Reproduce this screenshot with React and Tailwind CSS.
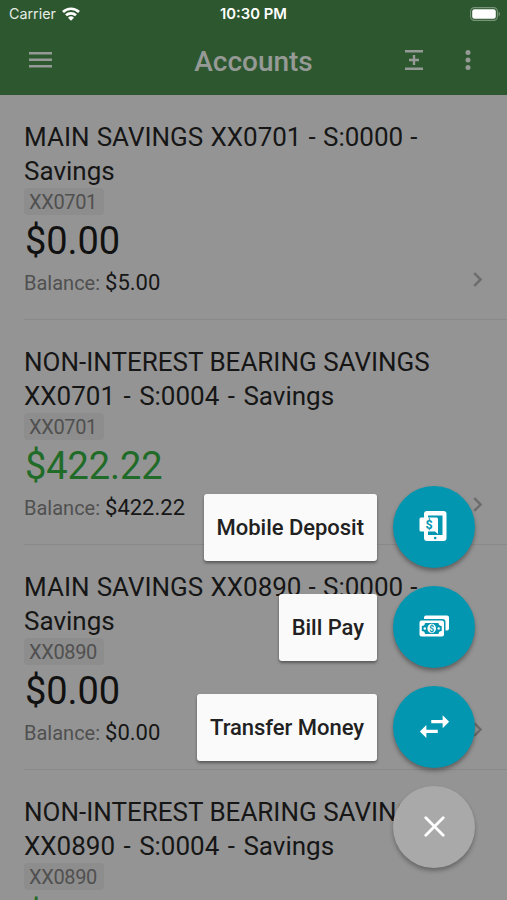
import { MdSwapHoriz, MdChevronRight } from 'react-icons/md';

const accounts = [
  { lines: ['MAIN SAVINGS XX0701 - S:0000 -', 'Savings'], mask: 'XX0701', amount: '$0.00', balance: '$5.00', spacing: 'block [word-spacing:0.7px]' },
  { lines: ['NON-INTEREST BEARING SAVINGS', 'XX0701 - S:0004 - Savings'], mask: 'XX0701', amount: '$422.22', balance: '$422.22', positive: true, spacing: 'block last:[word-spacing:2px]' },
  { lines: ['MAIN SAVINGS XX0890 - S:0000 -', 'Savings'], mask: 'XX0890', amount: '$0.00', balance: '$0.00', spacing: 'block [word-spacing:0.7px]' },
  { lines: ['NON-INTEREST BEARING SAVINGS', 'XX0890 - S:0004 - Savings'], mask: 'XX0890', amount: '$422.22', balance: '$422.22', positive: true, spacing: 'block last:[word-spacing:2px]' },
];

function WifiIcon() {
  return (
    <svg className="h-[14px] w-[18px]" viewBox="0 0 18 14" fill="none" stroke="white" strokeWidth="2.7">
      <path d="M1 5a11.5 11.5 0 0 1 16 0" />
      <path d="M4 8.3a7.3 7.3 0 0 1 10 0" />
      <path d="M9 13.8L6 10.8a4.3 4.3 0 0 1 6 0z" fill="white" stroke="none" />
    </svg>
  );
}

function BatteryIcon() {
  return (
    <svg className="h-[14px] w-[31px]" viewBox="0 0 31 14">
      <rect x="0.6" y="0.6" width="26.8" height="12.8" rx="3.8" fill="none" stroke="#789579" strokeWidth="1.1" />
      <rect x="2.2" y="2.2" width="23.6" height="9.6" rx="2.2" fill="white" />
      <path d="M28.6 4.8c1.9.7 1.9 3.7 0 4.4z" fill="#789579" />
    </svg>
  );
}

function DepositIcon() {
  return (
    <svg className="mr-[2px] h-[30px] w-[28px]" viewBox="0 0 28 30">
      <path
        fillRule="evenodd"
        fill="white"
        d="M8 0h16.500a3 3 0 0 1 3 3v24a3 3 0 0 1-3 3H8a3 3 0 0 1-3-3v-6.500H2a1.500 1.500 0 0 1-1.500-1.500V8A1.500 1.500 0 0 1 2 6.500h3V3a3 3 0 0 1 3-3zM9 4.500v2h8.500A1.500 1.500 0 0 1 19 8v15l-3-2.500H9v3.500h14.500V4.500z"
      />
      <circle cx="16.200" cy="27" r="1.300" fill="#0396b0" />
      <text x="10" y="18.200" textAnchor="middle" fontFamily="Roboto, sans-serif" fontWeight="700" fontSize="12.500" fill="#0396b0">$</text>
    </svg>
  );
}

function CashIcon() {
  return (
    <svg className="h-[22px] w-[30px]" viewBox="0 0 30 22">
      <path d="M5 4V2.500A2 2 0 0 1 7 .5h21a2 2 0 0 1 2 2v11a2 2 0 0 1-2 2h-1.500V7a3 3 0 0 0-3-3z" fill="white" />
      <rect x="0.500" y="5.500" width="24.500" height="16" rx="2" fill="white" />
      <path d="M6 8h13.500a3.200 3.200 0 0 0 3.200 3v5a3.200 3.200 0 0 0-3.200 3H6a3.200 3.200 0 0 0-3.200-3v-5A3.200 3.200 0 0 0 6 8z" fill="#0396b0" />
      <ellipse cx="12.700" cy="13.500" rx="4.300" ry="4.700" fill="white" />
      <circle cx="5.800" cy="13.500" r="1.200" fill="white" />
      <circle cx="19.700" cy="13.500" r="1.200" fill="white" />
      <text x="12.700" y="16.600" textAnchor="middle" fontFamily="Roboto, sans-serif" fontWeight="700" fontSize="8.500" fill="#0396b0">$</text>
    </svg>
  );
}

function AccountRow({ account }) {
  return (
    <li className="flex h-[225px] pt-[25px] pl-6">
      <div className="flex h-[200px] flex-1 justify-between border-b border-[#898989]">
        <div className="whitespace-nowrap">
          <h2 className="text-[26px] leading-[34px] text-[#161616]">
            {account.lines.map((line) => (
              <span key={line} className={account.spacing}>{line}</span>
            ))}
          </h2>
          <div className="flex">
            <span className="h-[27px] w-[80px] rounded bg-[#8d8d8d] px-[5px] text-[20px] leading-[28px] tracking-[-0.35px] text-[#505050]">
              {account.mask}
            </span>
          </div>
          <p className={account.positive ? 'pl-px text-[38px] leading-[53px] tracking-[-0.1px] text-[#1f6b27]' : 'pl-px text-[38px] leading-[53px] tracking-[-0.1px] text-[#111111]'}>
            {account.amount}
          </p>
          <p className="text-[20px] leading-[30px] text-[#505050]">
            Balance: <span className="text-[22px] text-[#161616]">{account.balance}</span>
          </p>
        </div>
        <MdChevronRight className="mt-[145px] mr-[15px] size-[29px] text-[#6c6c6c]" />
      </div>
    </li>
  );
}

function MenuAction({ label, children }) {
  return (
    <div className="flex items-center gap-4">
      <span className="flex h-[67px] items-center rounded-[3px] bg-[#fafafa] px-[13px] text-[22px] font-medium tracking-[-0.03px] text-[#212121] shadow-[0_2px_3px_rgba(0,0,0,0.4)]">
        {label}
      </span>
      <button className="flex size-[82px] items-center justify-center rounded-full bg-[#0396b0] pb-[2px] text-white shadow-[0_3px_4px_rgba(0,0,0,0.35)]">
        {children}
      </button>
    </div>
  );
}

export default function App() {
  return (
    <div className="relative h-[900px] w-[507px] overflow-hidden bg-[#949494] font-[Roboto,sans-serif]">
      <header className="h-[95px] bg-[#2d572f]">
        <div className="grid h-[28px] grid-cols-3 items-center px-[6px] font-[Inter,sans-serif] text-white">
          <div className="flex items-center gap-[6px] pl-[3px] text-[#e5ebe5]">
            <span className="text-[14.3px]">Carrier</span>
            <WifiIcon />
          </div>
          <span className="text-center text-[14.8px] font-semibold">10:30 PM</span>
          <div className="flex justify-end">
            <BatteryIcon />
          </div>
        </div>
        <div className="grid h-[64px] grid-cols-3 items-center text-[#969a96]">
          <svg className="ml-[29px] h-[16px] w-[23px]" viewBox="0 0 23 16" fill="currentColor">
            <path d="M0 0h23v2.500H0zM0 6.500h23v2.500H0zM0 13h23v2.500H0z" />
          </svg>
          <h1 className="pt-[3px] text-center text-[28px] font-medium">Accounts</h1>
          <div className="flex items-center justify-end pr-[36px]">
            <svg className="mr-[42px] h-[20px] w-[18px]" viewBox="0 0 18 20" fill="currentColor">
              <path d="M0 0h18v2.400H0zM0 17.600h18V20H0zM7.800 5h2.400v3.800h3.800v2.400h-3.800V15H7.800v-3.800H4V8.800h3.800z" />
            </svg>
            <svg className="h-[20px] w-[6px]" viewBox="0 0 6 20" fill="currentColor">
              <circle cx="3" cy="2.600" r="2.500" />
              <circle cx="3" cy="10" r="2.500" />
              <circle cx="3" cy="17.400" r="2.500" />
            </svg>
          </div>
        </div>
      </header>

      <ul>
        {accounts.map((account) => (
          <AccountRow key={account.lines.join(' ')} account={account} />
        ))}
      </ul>

      {/* speed dial menu over the list */}
      <div className="absolute right-[32px] bottom-[32px] flex flex-col items-end gap-[18px]">
        <MenuAction label="Mobile Deposit">
          <DepositIcon />
        </MenuAction>
        <MenuAction label="Bill Pay">
          <CashIcon />
        </MenuAction>
        <MenuAction label="Transfer Money">
          <MdSwapHoriz className="size-[39px]" />
        </MenuAction>
        <button className="flex size-[82px] items-center justify-center rounded-full bg-[#a9a9a9] pb-[2px] shadow-[0_3px_4px_rgba(0,0,0,0.3)]">
          <svg className="h-[21px] w-[21px]" viewBox="0 0 21 21" stroke="white" strokeWidth="2.800" strokeLinecap="round">
            <path d="M1.800 1.800l17.400 17.400M19.200 1.800L1.800 19.200" />
          </svg>
        </button>
      </div>
    </div>
  );
}
